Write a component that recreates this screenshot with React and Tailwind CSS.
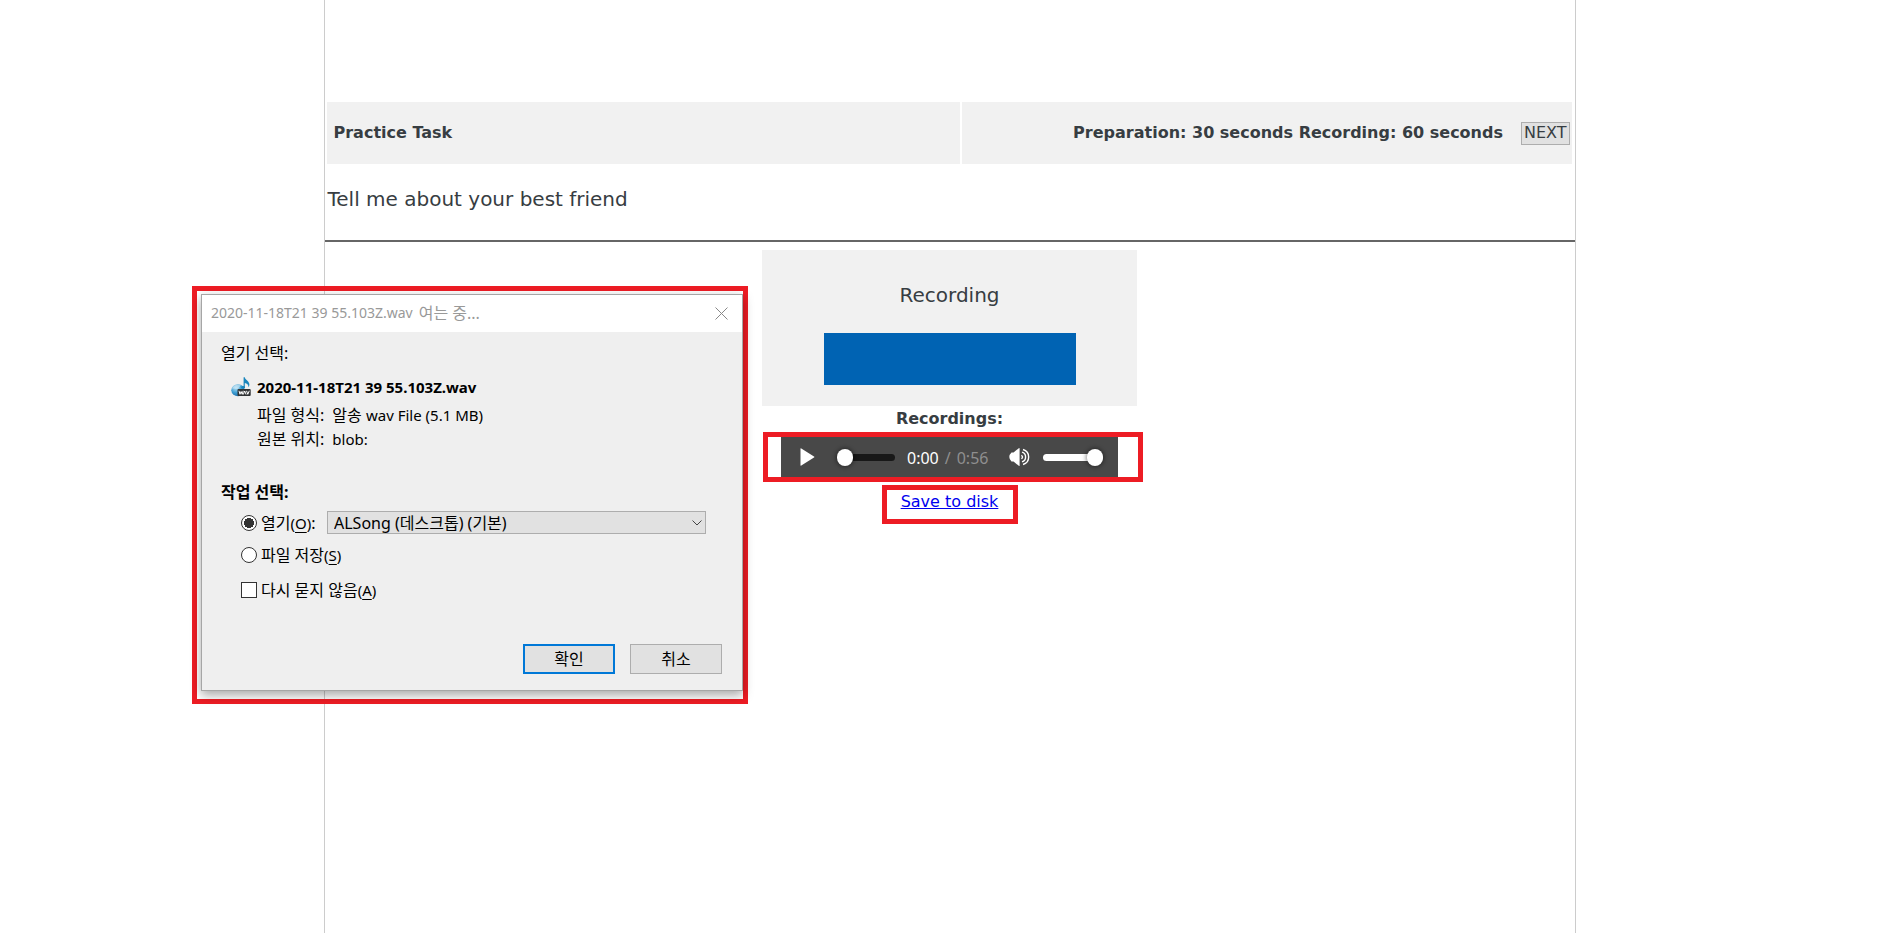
import { useState } from "react";

const rangeBase =
  "h-[18px] appearance-none bg-transparent [&::-webkit-slider-runnable-track]:h-[7px] [&::-webkit-slider-runnable-track]:rounded-full [&::-webkit-slider-thumb]:mt-[-5px] [&::-webkit-slider-thumb]:h-[17px] [&::-webkit-slider-thumb]:w-4 [&::-webkit-slider-thumb]:appearance-none [&::-webkit-slider-thumb]:rounded-full [&::-webkit-slider-thumb]:bg-white [&::-webkit-slider-thumb]:shadow-[0_0_4px_1px_rgba(0,0,0,0.45)]";

const radioBase =
  "size-4 shrink-0 appearance-none rounded-full border border-[#333] bg-white checked:bg-[radial-gradient(circle,#333_0_5px,#fff_5px)]";

function WavIcon() {
  return (
    <svg viewBox="0 0 20 20" className="size-5" aria-hidden="true">
      <defs>
        <radialGradient id="disc" cx="0.35" cy="0.3" r="0.8">
          <stop offset="0" stopColor="#b9dff2" />
          <stop offset="0.5" stopColor="#3f9fd3" />
          <stop offset="1" stopColor="#1565a3" />
        </radialGradient>
      </defs>
      <ellipse cx="7" cy="13.2" rx="6.7" ry="6" fill="url(#disc)" />
      <path d="M1 11.5A6.5 5.5 0 0 1 10 8L7 12Z" fill="#cfe9f6" opacity="0.6" />
      <path
        d="M12.6 0.3h1.2c.3 2.8 4.5 3.600 4.600 7.200 0 1-.4 2-.9 2.800.1-2.600-1.600-3.800-3.700-4.300v5h-1.200z"
        fill="#1b86bd"
      />
      <ellipse cx="12.200" cy="10.300" rx="1.800" ry="1.300" fill="#1b86bd" />
      <rect x="6.500" y="12" width="13.200" height="7" rx="1" fill="#303234" />
      <path
        d="M8 13.800l1 3.500 1.100-2.800 1.100 2.800 1-3.500M12.300 17.500l1.400-3.500 1.400 3.500M15.500 13.800l1.300 3.500 1.500-3.500"
        fill="none"
        stroke="#fff"
        strokeWidth="1"
      />
    </svg>
  );
}

function Player() {
  return (
    <div className="ml-px w-[380px] shrink-0 self-start border-[5px] border-[#ed1c24] pr-5 pl-[13px]">
      <div className="flex h-10 items-center bg-[#484848] pr-[15px] pl-[19px] text-white">
        <button type="button" aria-label="Play" className="shrink-0">
          <svg viewBox="0 0 15 18" className="h-[18px] w-[15px] fill-white">
            <path d="M0.500 0.800Q0.500 -0.100 1.300 0.500L14 8.500Q14.800 9 14 9.500L1.300 17.500Q0.500 18 0.500 17.200Z" />
          </svg>
        </button>
        <input
          type="range"
          aria-label="Position"
          min="0"
          max="56"
          defaultValue="0"
          className={`${rangeBase} ml-[22px] w-[58px] shrink-0 [&::-webkit-slider-runnable-track]:bg-[#181818]`}
        />
        <div className="ml-3 flex flex-1 gap-[6px] pt-[2px] font-['Noto_Sans',sans-serif] text-base leading-5">
          <span>0:00</span>
          <span className="text-[#8f8f8f]">/</span>
          <span className="text-[#8f8f8f]">0:56</span>
        </div>
        <button type="button" aria-label="Mute" className="shrink-0">
          <svg viewBox="0 0 22 20" className="h-5 w-[22px]" fill="none" stroke="#fff">
            <path
              d="M2.500 5.500H4.500L9.800 1.200Q10.600 0.700 10.600 1.600V18.400Q10.600 19.300 9.800 18.800L4.500 14.500H2.500Q0.300 12.500 0.300 10T2.500 5.500Z"
              fill="#fff"
              stroke="none"
            />
            <path
              d="M12.300 8.300a1.800 1.800 0 0 1 0 3.400M13 5.200a5 5 0 0 1 0 9.600M14 2.500a7.800 7.800 0 0 1 0 15"
              strokeWidth="1.400"
            />
          </svg>
        </button>
        <input
          type="range"
          aria-label="Volume"
          min="0"
          max="100"
          defaultValue="100"
          className={`${rangeBase} ml-3 w-[60px] shrink-0 [&::-webkit-slider-runnable-track]:bg-white`}
        />
      </div>
    </div>
  );
}

function Key({ children }) {
  return (
    <span className="text-[15px]">
      (<span className="underline underline-offset-[3px]">{children}</span>)
    </span>
  );
}

function OpenFileDialog() {
  const [action, setAction] = useState("open");
  return (
    <div className="absolute top-[286px] left-48 w-[556px] border-[5px] border-[#ed1c24] pt-[3px] pb-2 pl-1 font-['Noto_Sans','Noto_Sans_CJK_KR',sans-serif] text-base leading-[22px] text-black">
      <div
        role="dialog"
        aria-labelledby="dialog-title"
        className="border border-[#a6a6a6] bg-[#efefef] shadow-[0_4px_10px_rgba(0,0,0,0.35)]"
      >
        <div className="flex h-[37px] items-center justify-between bg-white pr-[14px] pb-px pl-[9px] text-[#999]">
          <h2 id="dialog-title" className="flex gap-[6px]">
            <span className="text-sm leading-[22px]">2020-11-18T21 39 55.103Z.wav</span>
            <span>여는 중...</span>
          </h2>
          <button type="button" aria-label="닫기">
            <svg viewBox="0 0 13 13" className="size-[13px]" stroke="#888" fill="none">
              <path d="M0.500 0.500L12.500 12.500M12.500 0.500L0.500 12.500" />
            </svg>
          </button>
        </div>

        <form className="pt-[10px] pr-5 pb-4 pl-[19px]" onSubmit={(e) => e.preventDefault()}>
          <p>열기 선택:</p>
          <div className="mt-3 flex items-center gap-[6px] pl-[10px]">
            <WavIcon />
            <p className="text-[15px] leading-[22px] font-bold">2020-11-18T21 39 55.103Z.wav</p>
          </div>
          <dl className="mt-[6px] grid grid-cols-[auto_1fr] gap-x-2 gap-y-[2px] pl-9">
            <dt>파일 형식:</dt>
            <dd>
              알송 <span className="text-[15px]">wav File (5.1 MB)</span>
            </dd>
            <dt>원본 위치:</dt>
            <dd className="text-[15px] leading-[22px]">blob:</dd>
          </dl>

          <p className="mt-[31px] font-bold">작업 선택:</p>
          <div className="mt-2 flex items-center pl-5">
            <label className="flex w-[86px] shrink-0 items-center gap-1">
              <input
                type="radio"
                name="action"
                checked={action === "open"}
                onChange={() => setAction("open")}
                className={radioBase}
              />
              <span className="whitespace-nowrap">
                열기<Key>O</Key>:
              </span>
            </label>
            <div className="grid w-[379px] items-center">
              <select
                aria-label="연결 프로그램"
                className="col-start-1 row-start-1 h-[23px] w-full appearance-none border border-[#adadad] bg-[#e1e1e1] pl-[6px] text-base leading-5"
              >
                <option>ALSong (데스크톱) (기본)</option>
              </select>
              <svg
                viewBox="0 0 10 6"
                className="pointer-events-none col-start-1 row-start-1 mr-1 h-[6px] w-[10px] justify-self-end"
                fill="none"
                stroke="#444"
              >
                <path d="M0.500 0.500L5 5L9.500 0.500" />
              </svg>
            </div>
          </div>
          <label className="mt-[10px] flex w-fit items-center gap-1 pl-5">
            <input
              type="radio"
              name="action"
              checked={action === "save"}
              onChange={() => setAction("save")}
              className={radioBase}
            />
            <span>
              파일 저장<Key>S</Key>
            </span>
          </label>
          <label className="mt-[13px] flex w-fit items-center gap-1 pl-5">
            <input
              type="checkbox"
              className="size-4 shrink-0 appearance-none border border-[#333] bg-white checked:bg-[#333]"
            />
            <span>
              다시 묻지 않음<Key>A</Key>
            </span>
          </label>

          <div className="mt-[43px] flex justify-end gap-[15px]">
            <button type="submit" className="h-[30px] w-[92px] border-2 border-[#0078d7] bg-[#e1e1e1]">
              확인
            </button>
            <button type="button" className="h-[30px] w-[92px] border border-[#adadad] bg-[#e1e1e1]">
              취소
            </button>
          </div>
        </form>
      </div>
    </div>
  );
}

export default function App() {
  return (
    <div className="relative min-h-screen bg-white font-['DejaVu_Sans',sans-serif] text-base text-[#373d42]">
      <main className="mx-auto min-h-screen w-full max-w-[1252px] border-x border-[#ccc] pt-[102px]">
        <header className="grid grid-cols-[633fr_610fr] gap-[2px] pr-[3px] pl-[2px] font-bold">
          <div className="flex min-h-[62px] items-center bg-[#f1f1f1] px-[7px]">
            <h1>Practice Task</h1>
          </div>
          <div className="flex min-h-[62px] items-center justify-end gap-[18px] bg-[#f1f1f1] pr-[2px]">
            <p>Preparation: 30 seconds Recording: 60 seconds</p>
            <button
              type="button"
              className="h-[23px] border border-[#adadad] bg-[#e1e1e1] px-[2px] leading-5 font-normal"
            >
              NEXT
            </button>
          </div>
        </header>

        <p className="border-b-2 border-[#666] px-[3px] pt-5 pb-[26px] text-xl leading-[30px]">
          Tell me about your best friend
        </p>

        <section className="mx-auto mt-2 flex w-[375px] flex-col items-center">
          <div className="flex w-full flex-col items-center bg-[#f1f1f1] pt-[30px] pb-[21px]">
            <h2 className="text-xl leading-[30px]">Recording</h2>
            <div className="mt-[23px] h-[52px] w-[252px] bg-[#0063b3]" />
          </div>
          <h3 className="leading-[26px] font-bold">Recordings:</h3>
          <Player />
          <div className="mt-[3px] flex w-[136px] justify-center border-[5px] border-[#ed1c24] pb-[5px]">
            <a href="#save" className="leading-6 text-[#0000ee] underline">
              Save to disk
            </a>
          </div>
        </section>
      </main>
      <OpenFileDialog />
    </div>
  );
}
